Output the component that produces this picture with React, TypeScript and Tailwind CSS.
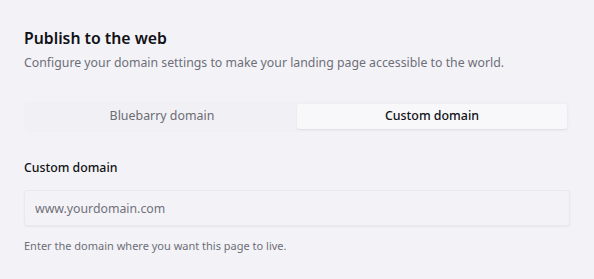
import { useState } from "react";

type Mode = "bluebarry" | "custom";

export default function App() {
  const [mode, setMode] = useState<Mode>("custom");

  return (
    <div
      className="min-h-screen w-full bg-[#f3f3f7] px-6 pt-[26px] text-[#111116]"
      style={{ fontFamily: '"Noto Sans", "Open Sans", sans-serif' }}
    >
      <h1 className="text-[15.8px] font-semibold leading-6">Publish to the web</h1>
      <p className="mt-[3px] text-[12.3px] leading-5 text-[#6e6e78]">
        Configure your domain settings to make your landing page accessible to the world.
      </p>

      <div className="mt-[28px] grid grid-cols-2 rounded-md bg-[#f1f1f5] p-[3px]">
        <button
          type="button"
          onClick={() => setMode("bluebarry")}
          className={`h-[25px] rounded-[3px] text-[12.4px] ${
            mode === "bluebarry"
              ? "bg-[#f8f8fb] font-medium text-[#111116] shadow-[0_1px_2px_rgba(0,0,0,0.08)]"
              : "text-[#6b6b74]"
          }`}
        >
          Bluebarry domain
        </button>
        <button
          type="button"
          onClick={() => setMode("custom")}
          className={`h-[25px] rounded-[3px] text-[12.4px] ${
            mode === "custom"
              ? "bg-[#f8f8fb] font-medium text-[#111116] shadow-[0_1px_2px_rgba(0,0,0,0.08)]"
              : "text-[#6b6b74]"
          }`}
        >
          Custom domain
        </button>
      </div>

      <label htmlFor="domain" className="mt-[26px] block text-[12.3px] font-medium leading-5">
        Custom domain
      </label>
      <input
        id="domain"
        type="text"
        placeholder="www.yourdomain.com"
        className="mt-[12px] h-[36px] w-full rounded-[3px] border border-[#e8e8ee] bg-[#f3f3f7] px-[10px] text-[12.3px] shadow-[0_1px_2px_rgba(0,0,0,0.05)] outline-none placeholder:text-[#70707a]"
      />
      <p className="mt-[12px] text-[11px] leading-4 text-[#6e6e78]">
        Enter the domain where you want this page to live.
      </p>
    </div>
  );
}
